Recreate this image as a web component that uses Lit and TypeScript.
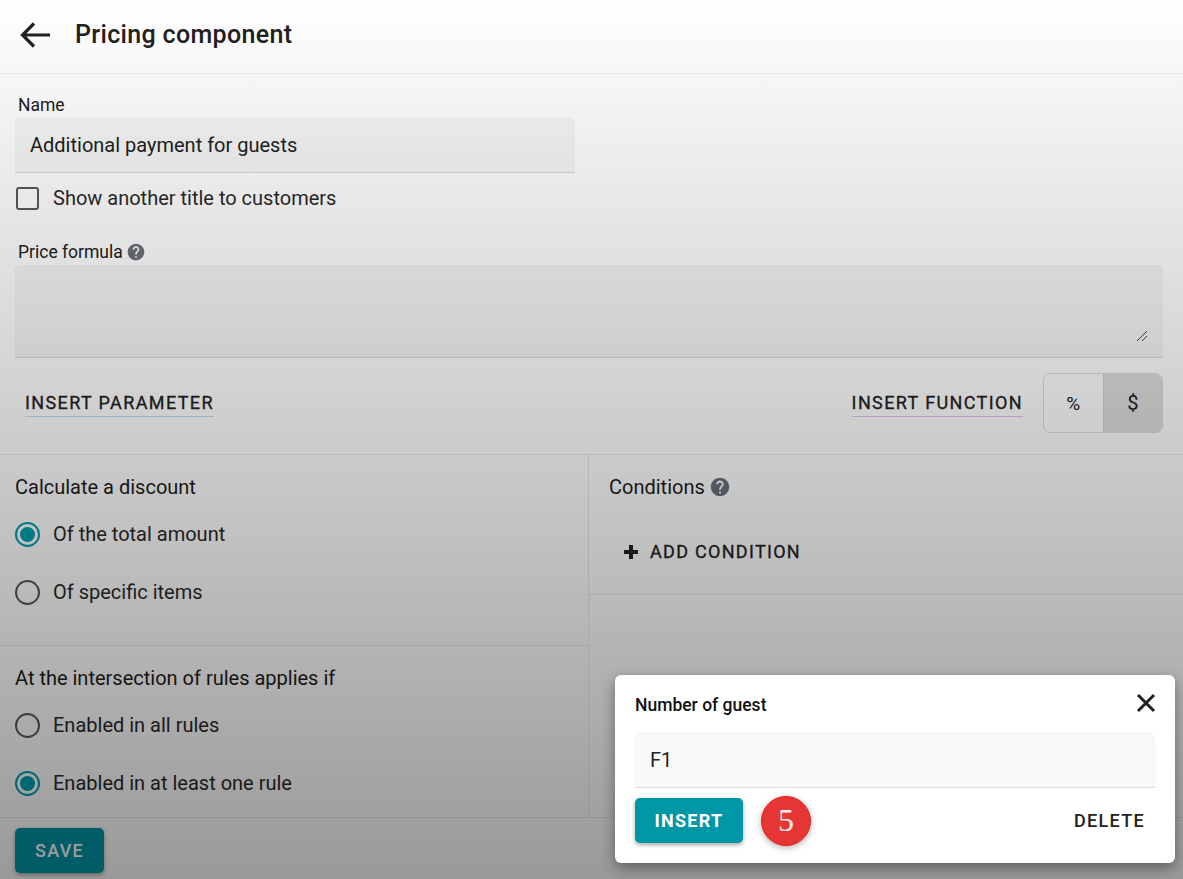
import { LitElement, html, css, svg } from "lit";
import { customElement } from "lit/decorators.js";

const help = (size: number) => html`<svg class="help" width=${size} height=${size} viewBox="0 0 24 24"><path fill="#6a7178" d="M12 2C6.48 2 2 6.48 2 12s4.48 10 10 10 10-4.48 10-10S17.52 2 12 2zm1 17h-2v-2h2v2zm2.07-7.75l-.9.92C13.45 12.9 13 13.5 13 15h-2v-.5c0-1.1.45-2.1 1.17-2.83l1.24-1.26c.37-.36.59-.86.59-1.41 0-1.1-.9-2-2-2s-2 .9-2 2H8c0-2.21 1.79-4 4-4s4 1.79 4 4c0 .88-.36 1.68-.93 2.25z"/></svg>`;

@customElement("app-root")
export class AppRoot extends LitElement {
  static styles = css`
    :host { display: block; position: relative; width: 1183px; height: 879px; overflow: hidden; background: #fff; color: #212121; font-family: Roboto, "Liberation Sans", sans-serif; }
    * { box-sizing: border-box; }
    .page { display: flex; flex-direction: column; height: 879px; }
    .header { height: 74px; flex: none; display: flex; align-items: center; padding-left: 19px; gap: 24px; border-bottom: 1px solid #f0f0f0; }
    .header svg { display: block; margin-bottom: 3px; }
    .title { font-size: 25px; font-weight: 500; letter-spacing: 0.33px; margin-bottom: 4px; }
    .top { flex: none; height: 381px; padding: 0 20px 0 15px; border-bottom: 1px solid #ececec; display: flex; flex-direction: column; }
    .label { font-size: 17.5px; line-height: 20px; padding-left: 3px; display: flex; align-items: center; gap: 3px; }
    .name-label { margin-top: 21px; }
    .input { background: #f6f6f6; border-radius: 5px 5px 0 0; border-bottom: 1px solid #dcdcdc; box-shadow: inset 0 0 0 1px rgba(0,0,0,.015); font-size: 20px; display: flex; align-items: center; padding: 0 15px; }
    .name-input { width: 560px; height: 55px; margin-top: 3px; }
    .check-row { display: flex; align-items: center; gap: 14px; margin-top: 14px; padding-left: 1px; font-size: 20px; height: 22px; color: #2a2a2a; }
    .check { width: 23px; height: 23px; border: 2px solid #5a5a5a; border-radius: 3px; flex: none; }
    .formula-label { margin-top: 33px; }
    .textarea { width: 1148px; height: 93px; margin-top: 3px; position: relative; }
    .grip { position: absolute; right: 15px; bottom: 15px; display: block; }
    .tools { display: flex; align-items: center; margin-top: 15px; padding-left: 10px; height: 60px; }
    .link { font-size: 18px; font-weight: 400; letter-spacing: 1.38px; line-height: 24px; border-bottom: 1px solid #bbdefb; padding-bottom: 1px; margin-top: 2px; -webkit-text-stroke: 0.3px #212121; }
    .link.fn { margin-left: auto; margin-right: 20px; border-bottom-color: #e4c5ee; }
    .toggle { display: flex; width: 120px; height: 60px; border: 1px solid #dedede; border-radius: 7px; overflow: hidden; font-size: 19px; }
    .toggle div { flex: 1; display: flex; align-items: center; justify-content: center; }
    .toggle .on { background: #dfdfdf; border-left: 1px solid #d0d0d0; font-size: 20px; }
    .grid { flex: 1; display: grid; grid-template-columns: 589px 1fr; grid-template-rows: 191px 171px; }
    .cell { padding: 0 15px; }
    .left { border-right: 1px solid #ececec; }
    .sec1 { border-bottom: 1px solid #ececec; padding-top: 20px; }
    .sec2 { padding-top: 20px; }
    .heading { font-size: 20px; line-height: 24px; display: flex; align-items: center; gap: 4px; color: #1c1c1c; }
    .radio-row { display: flex; align-items: center; gap: 13px; font-size: 20px; height: 26px; color: #2a2a2a; margin-top: 32px; }
    .heading + .radio-row { margin-top: 22px; }
    .radio { width: 25px; height: 25px; border-radius: 50%; border: 2px solid #5a5a5a; flex: none; display: flex; align-items: center; justify-content: center; }
    .radio.on { border: 2.5px solid #00a0ae; }
    .radio.on::after { content: ""; width: 15px; height: 15px; border-radius: 50%; background: #00a0ae; }
    .right { padding: 0; height: 140px; border-bottom: 1px solid #ececec; padding-top: 20px; }
    .right .heading { padding-left: 20px; }
    .add { display: flex; align-items: center; gap: 12px; margin: 41px 0 0 35px; font-size: 18px; font-weight: 400; letter-spacing: 1.3px; line-height: 24px; -webkit-text-stroke: 0.3px #212121; }
    .add svg { display: block; }
    .footer { flex: none; height: 62px; border-top: 1px solid #ececec; padding: 10px 15px 0; }
    .btn { display: inline-flex; align-items: center; justify-content: center; height: 45px; background: #0097a7; color: #fff; font-size: 18px; font-weight: 500; letter-spacing: 1.3px; border-radius: 5px; box-shadow: 0 2px 4px rgba(0,0,0,.35); }
    .save { width: 89px; }
    .overlay { position: absolute; inset: 0; background: linear-gradient(to bottom, rgba(0,0,0,0), rgba(0,0,0,.4)); pointer-events: none; }
    .popup { position: absolute; left: 615px; top: 675px; width: 560px; height: 188px; background: #fff; border-radius: 6px; box-shadow: 0 5px 14px rgba(0,0,0,.4); padding: 0 20px; display: flex; flex-direction: column; }
    .pop-head { display: flex; align-items: center; justify-content: space-between; height: 58px; font-size: 17.5px; font-weight: 500; color: #111; }
    .pop-title { margin-top: 2px; }
    .pop-head svg { display: block; margin-right: -1px; margin-bottom: 2px; }
    .pop-input { height: 55px; background: #f9f9f9; color: #222; }
    .pop-actions { display: flex; align-items: center; margin-top: 10px; height: 45px; }
    .insert { width: 108px; font-weight: 700; }
    .badge { width: 50px; height: 50px; margin-left: 18px; border-radius: 50%; background: #e53535; border: 1.5px solid #f21c1c; color: #ffecec; font-family: "Liberation Serif", "DejaVu Serif", serif; font-size: 32px; display: flex; align-items: center; justify-content: center; box-shadow: 0 2px 6px rgba(0,0,0,.3); flex: none; }
    .delete { margin-left: auto; margin-right: 10px; font-size: 18px; font-weight: 500; letter-spacing: 1.3px; color: #222; }
  `;

  render() {
    return html`
      <div class="page">
        <div class="header">
          <svg width="32" height="28" viewBox="0 0 32 28" fill="none" stroke="#212121" stroke-width="3.2"><path d=${"M31 14H5M15 2.5L3.5 14 15 25.5"}/></svg>
          <div class="title">Pricing component</div>
        </div>
        <div class="top">
          <div class="label name-label">Name</div>
          <div class="input name-input">Additional payment for guests</div>
          <div class="check-row"><div class="check"></div>Show another title to customers</div>
          <div class="label formula-label">Price formula ${help(20)}</div>
          <div class="input textarea">
            <svg class="grip" width="12" height="12" viewBox="0 0 12 12" stroke="#444" stroke-width="1">${svg`<path d="M1 11L11 1M6 11L11 6"/>`}</svg>
          </div>
          <div class="tools">
            <div class="link">INSERT PARAMETER</div>
            <div class="link fn">INSERT FUNCTION</div>
            <div class="toggle"><div>%</div><div class="on">$</div></div>
          </div>
        </div>
        <div class="grid">
          <div class="cell left sec1">
            <div class="heading">Calculate a discount</div>
            <div class="radio-row"><div class="radio on"></div>Of the total amount</div>
            <div class="radio-row"><div class="radio"></div>Of specific items</div>
          </div>
          <div class="right">
            <div class="heading">Conditions ${help(22)}</div>
            <div class="add">
              <svg width="14" height="14" viewBox="0 0 14 14" fill="#212121"><path d="M5 0h4v5h5v4H9v5H5V9H0V5h5z"/></svg>
              ADD CONDITION
            </div>
          </div>
          <div class="cell left sec2">
            <div class="heading">At the intersection of rules applies if</div>
            <div class="radio-row"><div class="radio"></div>Enabled in all rules</div>
            <div class="radio-row"><div class="radio on"></div>Enabled in at least one rule</div>
          </div>
          <div></div>
        </div>
        <div class="footer"><div class="btn save">SAVE</div></div>
      </div>
      <div class="overlay"></div>
      <div class="popup">
        <div class="pop-head">
          <div class="pop-title">Number of guest</div>
          <svg width="20" height="20" viewBox="0 0 20 20" stroke="#212121" stroke-width="3" fill="none"><path d="M2 2L18 18M18 2L2 18"/></svg>
        </div>
        <div class="input pop-input">F1</div>
        <div class="pop-actions">
          <div class="btn insert">INSERT</div>
          <div class="badge">5</div>
          <div class="delete">DELETE</div>
        </div>
      </div>
    `;
  }
}
